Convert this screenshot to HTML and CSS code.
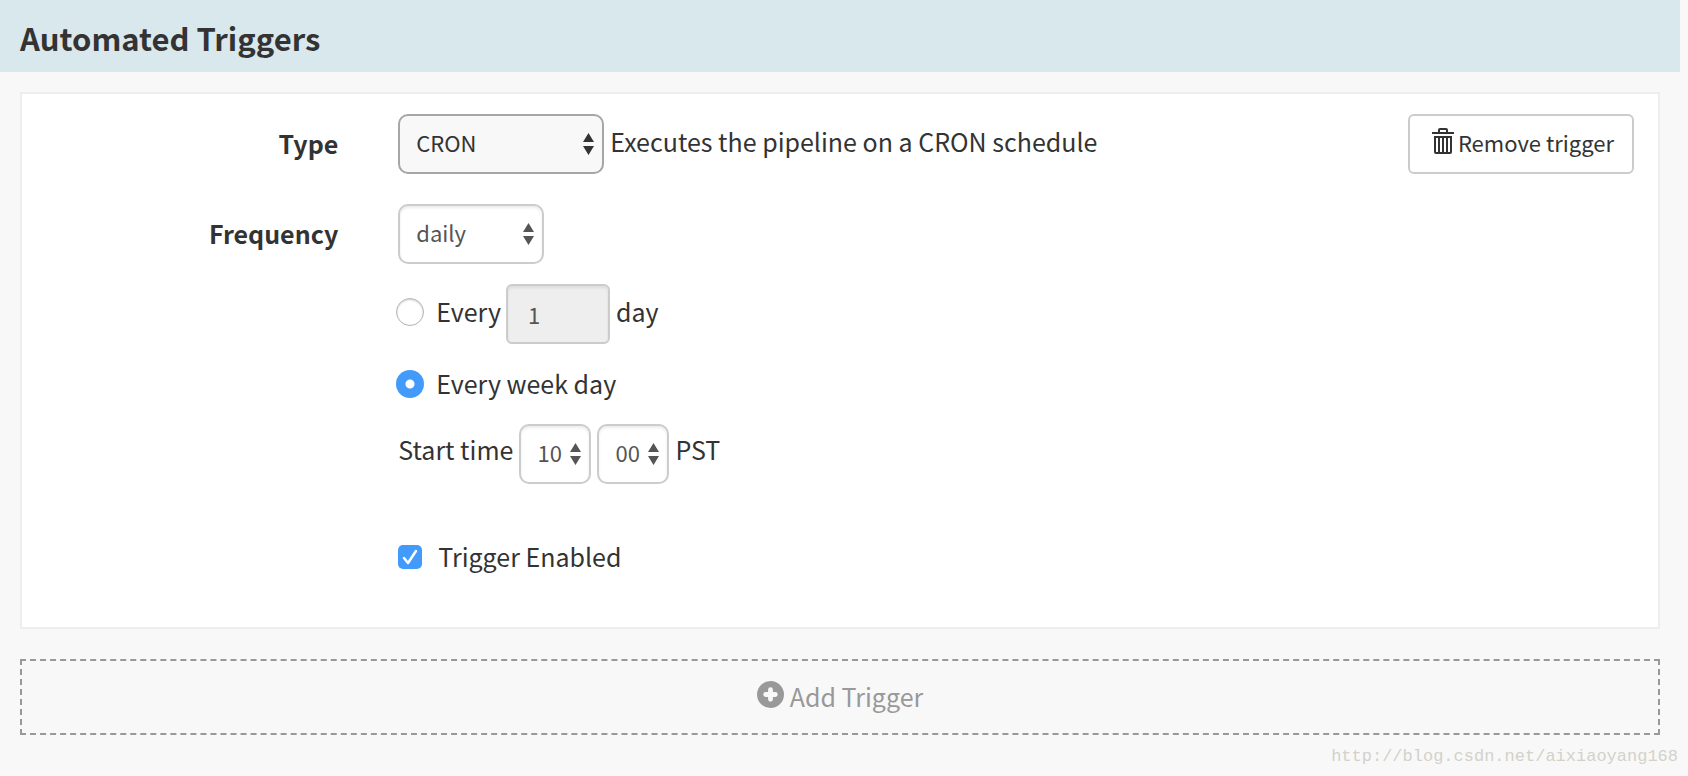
FILE: index.html
```html
<!DOCTYPE html>
<html lang="en">
<head>
    <meta charset="UTF-8">
    <meta name="viewport" content="width=device-width, initial-scale=1.0">
    <title>Automated Triggers</title>
    <link rel="stylesheet" href="styles.css">
</head>
<body>
    <header class="page-header">
        <h1>Automated Triggers</h1>
    </header>

    <form class="triggers">
        <div class="trigger">
            <div class="row">
                <label class="row-label" for="type">Type</label>
                <div class="row-content">
                    <span class="select select-type">
                        <select id="type">
                            <option>CRON</option>
                        </select>
                        <svg class="arrows" viewBox="0 0 11 22"><path d="M0 9 5.500 0 11 9zM0 13h11L5.500 22z"/></svg>
                    </span>
                    <span class="text">Executes the pipeline on a CRON schedule</span>
                    <button type="button" class="remove-button">
                        <svg class="trash" viewBox="0 0 22 27">
                            <path d="M0 4h6V2q0-2 2-2h6q2 0 2 2v2h6v2H0zM8 2v2h6V2z" fill-rule="evenodd"/>
                            <path d="M2 8h18v16q0 2-2 2H4q-2 0-2-2zM4 10v14h2V10zM8 10v14h2V10zM12 10v14h2V10zM16 10v14h2V10z" fill-rule="evenodd"/>
                        </svg>
                        Remove trigger
                    </button>
                </div>
            </div>

            <div class="row">
                <label class="row-label" for="frequency">Frequency</label>
                <div class="row-content">
                    <span class="select select-frequency">
                        <select id="frequency">
                            <option>daily</option>
                        </select>
                        <svg class="arrows" viewBox="0 0 11 22"><path d="M0 9 5.500 0 11 9zM0 13h11L5.500 22z"/></svg>
                    </span>
                </div>
            </div>

            <div class="options">
                <div class="option">
                    <input type="radio" name="daily" id="everyDay">
                    <label class="text" for="everyDay">Every</label>
                    <input type="text" class="days" value="1" aria-label="Number of days" disabled>
                    <span class="text">day</span>
                </div>
                <div class="option">
                    <input type="radio" name="daily" id="everyWeekDay" checked>
                    <label for="everyWeekDay">Every week day</label>
                </div>
                <div class="option start-time">
                    <label class="text" for="hour">Start time</label>
                    <span class="select select-time">
                        <select id="hour">
                            <option>10</option>
                        </select>
                        <svg class="arrows" viewBox="0 0 11 22"><path d="M0 9 5.500 0 11 9zM0 13h11L5.500 22z"/></svg>
                    </span>
                    <span class="select select-time">
                        <select id="minute" aria-label="Minute">
                            <option>00</option>
                        </select>
                        <svg class="arrows" viewBox="0 0 11 22"><path d="M0 9 5.500 0 11 9zM0 13h11L5.500 22z"/></svg>
                    </span>
                    <span class="text">PST</span>
                </div>
                <div class="option enabled">
                    <span class="checkbox">
                        <input type="checkbox" id="enabled" checked>
                        <svg class="check" viewBox="0 0 24 24"><path d="M6 13l4 5 8-12"/></svg>
                    </span>
                    <label for="enabled">Trigger Enabled</label>
                </div>
            </div>
        </div>

        <button type="button" class="add-button">
            <svg class="plus" viewBox="0 0 28 28">
                <circle cx="14" cy="14" r="14"/>
                <path d="M14 9v10M9 14h10"/>
            </svg>
            Add Trigger
        </button>
    </form>

    <div class="watermark">http://blog.csdn.net/aixiaoyang168</div>
</body>
</html>
```

FILE: styles.css
```css
* {
    box-sizing: border-box;
}
body {
    margin: 0;
    min-height: 100vh;
    position: relative;
    background-color: #f8f8f8;
    color: #333;
    font-family: "Noto Sans CJK SC", "Noto Sans", sans-serif;
    font-size: 25px;
    line-height: 40px;
}
.page-header {
    margin-right: 8px;
    padding: 18px 20px 14px;
    background-color: #d9e8ec;
}
h1 {
    margin: 0;
    font-size: 31px;
    font-weight: bold;
    line-height: 40px;
}
.triggers {
    padding: 20px 28px 40px 20px;
}
.trigger {
    padding: 20px 0 50px;
    background-color: #fff;
    border: 2px solid #eee;
}
.row {
    display: grid;
    grid-template-columns: 23% 1fr;
    align-items: center;
    margin-bottom: 30px;
}
.row-label {
    padding: 0 60px 2px 0;
    text-align: right;
    font-weight: bold;
}
.row-content {
    display: flex;
    align-items: center;
    gap: 6px;
    padding-right: 24px;
}
.text {
    padding-bottom: 6px;
}
select, input, button {
    margin: 0;
    font-family: inherit;
    font-size: 22px;
}
.select {
    position: relative;
    color: #555;
}
.select select {
    display: block;
    width: 100%;
    height: 60px;
    padding: 0 16px 4px;
    appearance: none;
    color: inherit;
    background-color: #fff;
    border: 2px solid #ccc;
    border-radius: 10px;
    box-shadow: inset 0 2px 3px rgba(0, 0, 0, 0.08);
}
.arrows {
    position: absolute;
    top: 19px;
    right: 10px;
    width: 11px;
    height: 22px;
    fill: currentColor;
    pointer-events: none;
}
.select-type {
    width: 206px;
    color: #333;
}
.select-type select {
    background-color: #f8f8f8;
    border-color: #a6a6a6;
    box-shadow: none;
}
.select-frequency {
    width: 146px;
}
.select-time {
    width: 72px;
}
.remove-button {
    display: flex;
    align-items: center;
    gap: 4px;
    height: 60px;
    margin-left: auto;
    padding: 0 18px 4px 22px;
    color: #333;
    background-color: #fff;
    border: 2px solid #ccc;
    border-radius: 6px;
    cursor: pointer;
}
.trash {
    width: 22px;
    height: 27px;
    margin-bottom: 2px;
    fill: #333;
}
.options {
    margin-left: 23%;
    margin-top: -10px;
}
.option {
    display: flex;
    align-items: center;
    gap: 6px;
    margin-bottom: 20px;
}
.option > label {
    padding-bottom: 2px;
    line-height: 38px;
}
.option > .text {
    padding-bottom: 6px;
}
.start-time > .text {
    padding-bottom: 10px;
}
input[type="radio"] {
    width: 28px;
    height: 28px;
    margin: 0 6px 0 -2px;
    appearance: none;
    background-color: #fff;
    border: 1px solid #b4b4b4;
    border-radius: 50%;
    box-shadow: inset 0 1px 2px rgba(0, 0, 0, 0.2);
}
#everyDay {
    margin-bottom: 4px;
}
input[type="radio"]:checked {
    background: radial-gradient(circle, #fff 4px, #429bfa 5px);
    border: none;
    box-shadow: none;
}
.days {
    width: 104px;
    height: 60px;
    margin-left: -1px;
    padding: 0 20px;
    color: #555;
    background-color: #eee;
    border: 2px solid #ccc;
    border-radius: 6px;
    box-shadow: inset 0 2px 3px rgba(0, 0, 0, 0.08);
}
.enabled {
    margin-top: 53px;
    margin-bottom: 0;
    gap: 16px;
}
.checkbox {
    position: relative;
    width: 24px;
    height: 24px;
}
input[type="checkbox"] {
    display: block;
    width: 24px;
    height: 24px;
    appearance: none;
    background-color: #429bfa;
    border-radius: 5px;
}
.check {
    position: absolute;
    inset: 0;
    fill: none;
    stroke: #fff;
    stroke-width: 2.500;
    stroke-linecap: round;
    stroke-linejoin: round;
    pointer-events: none;
}
.add-button {
    display: flex;
    align-items: center;
    justify-content: center;
    gap: 6px;
    width: 100%;
    height: 76px;
    margin-top: 30px;
    padding-bottom: 4px;
    color: #999;
    font-size: 25px;
    background: none;
    border: 2px dashed #999;
    cursor: pointer;
}
.plus {
    width: 27px;
    height: 27px;
    margin-bottom: 2px;
    fill: #999;
    stroke: #f8f8f8;
    stroke-width: 0;
}
.plus path {
    stroke-width: 5;
    stroke-linecap: round;
}
.watermark {
    position: absolute;
    right: 10px;
    bottom: 7px;
    color: #d2d2ca;
    font-family: "Liberation Mono", monospace;
    font-size: 17px;
    line-height: 24px;
}
```
